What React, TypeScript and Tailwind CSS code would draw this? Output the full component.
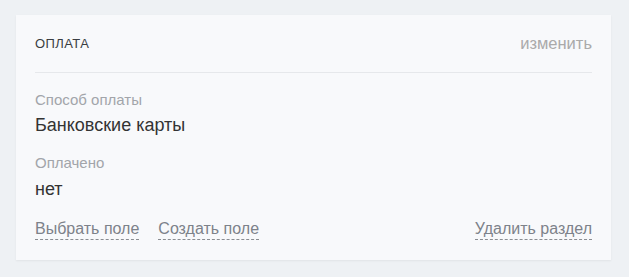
import React from "react";

export default function App() {
  return (
    <div className="w-[629px] h-[277px] bg-[#eef1f4] pt-[15px] pl-[16px]" style={{ fontFamily: '"Liberation Sans", Arial, sans-serif' }}>
      <div className="w-[595px] h-[245px] bg-[#f8f9fb] shadow-[0_1px_2px_rgba(0,0,0,0.06)] px-[19px]">
        <div className="h-[58px] flex items-center justify-between border-b border-[#e6e8eb]">
          <span className="text-[13px] tracking-[0.4px] text-[#3a3d42] uppercase">Оплата</span>
          <span className="text-[16.5px] text-[#aaaaaa]">изменить</span>
        </div>
        <div className="pt-[18px]">
          <div className="text-[15px] leading-[18px] text-[#a2a5aa]">Способ оплаты</div>
          <div className="mt-[5px] text-[18px] leading-[22px] text-[#333]">Банковские карты</div>
          <div className="mt-[18px] text-[15px] leading-[18px] text-[#a2a5aa]">Оплачено</div>
          <div className="mt-[6px] text-[18px] leading-[22px] text-[#333]">нет</div>
          <div className="mt-[19px] flex items-start text-[16px] text-[#7d828a]">
            <span className="border-b border-dashed border-[#8a8d92] leading-[20px]">Выбрать поле</span>
            <span className="ml-[19px] border-b border-dashed border-[#8a8d92] leading-[20px]">Создать поле</span>
            <span className="ml-auto border-b border-dashed border-[#8a8d92] leading-[20px]">Удалить раздел</span>
          </div>
        </div>
      </div>
    </div>
  );
}
